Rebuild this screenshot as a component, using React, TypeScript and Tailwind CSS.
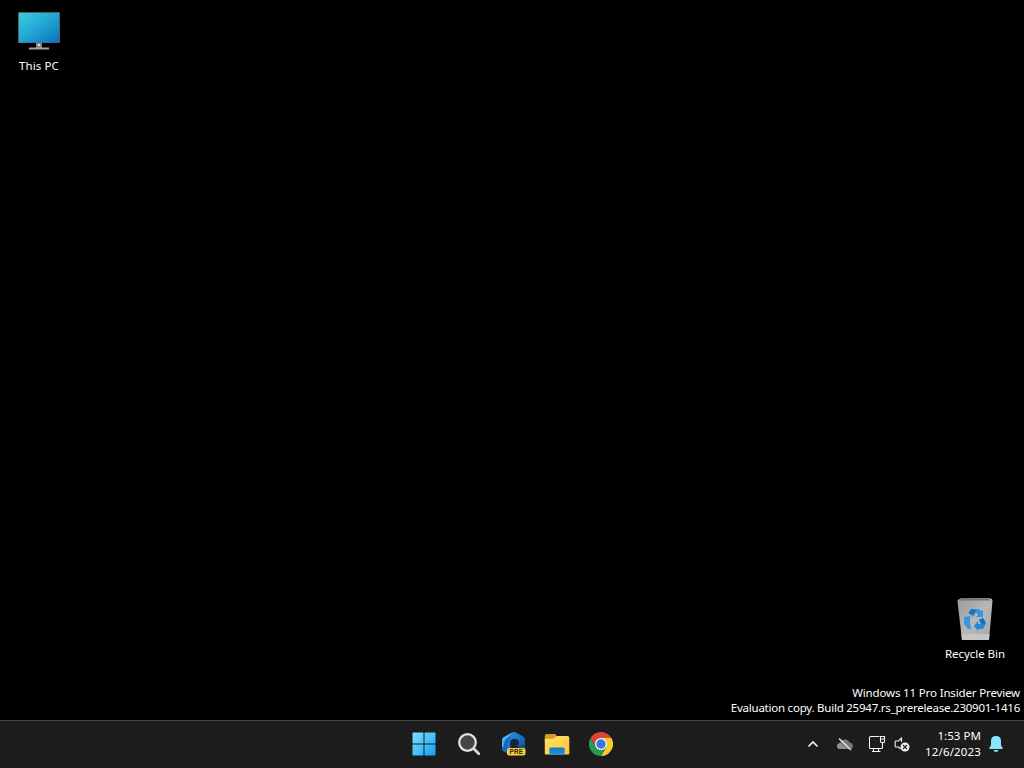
import type { ReactNode } from 'react';

function ThisPcIcon() {
  return (
    <svg className="w-12 h-12" viewBox="0 0 48 48">
      <defs>
        <linearGradient id="screen" x1="0" y1="0" x2="1" y2="1">
          <stop offset="0" stopColor="#35cfdf" />
          <stop offset="0.5" stopColor="#22a5d4" />
          <stop offset="1" stopColor="#0870bd" />
        </linearGradient>
      </defs>
      <rect x="3" y="4" width="42" height="31" rx="0.5" fill="#50606a" />
      <rect x="4" y="5" width="40" height="29.5" fill="url(#screen)" />
      <path d="M21 35h6v5h-6z" fill="#858585" />
      <path d="M23 36h2v2h-2z" fill="#dedede" />
      <path d="M14 39.5h20v2H14z" fill="#a3a3a3" />
    </svg>
  );
}

function RecycleBinIcon() {
  return (
    <svg className="w-12 h-12" viewBox="0 0 48 48">
      <defs>
        <linearGradient id="bin" x1="0" y1="0" x2="1" y2="1">
          <stop offset="0" stopColor="#999" />
          <stop offset="0.5" stopColor="#b8b8b8" />
          <stop offset="1" stopColor="#a5a5a5" />
        </linearGradient>
      </defs>
      <path d="M7.500 4.500 10 3.300H38.500Q41.500 3.300 41.500 6L38 45H11L6.500 6.500Q6.200 5 7.500 4.500Z" fill="url(#bin)" />
      <path d="M8 5.500 10.500 4H38L40 5.500Z" fill="#777" />
      <path d="M10.400 39H38.500L38 45H11Z" fill="#c6c6c6" />
      <path d="m17 18 3-4h8l2 2 2-1v7h-7l2-2-2-3-3 5Z" fill="#3a94dc" />
      <path d="m20 14 5 1-2 5-5-2Z" fill="#1473c2" />
      <path d="m13 22 6-1v7l1 6h-3l-4-5Z" fill="#3498e8" />
      <path d="m28 25 4-2 3 5-3 6h-5v2l-4-5 4-5v3h3Z" fill="#2489dc" />
      <path d="m28 25 4-2 3 5-4 1Z" fill="#0b72c6" />
    </svg>
  );
}

function StartIcon() {
  return (
    <svg className="w-6 h-6" viewBox="0 0 24 24">
      <defs>
        <linearGradient id="start" gradientUnits="userSpaceOnUse" x1="0" y1="0" x2="24" y2="24">
          <stop offset="0" stopColor="#7be2ff" />
          <stop offset="0.55" stopColor="#43bdfa" />
          <stop offset="1" stopColor="#169cf1" />
        </linearGradient>
      </defs>
      <path d="M1 .5h10.500v11H.5V1ZM12.500.5H23l.5.5v10.500h-11ZM.5 12.500h11v11H1L.5 23ZM12.500 12.500h11V23l-.5.5H12.500Z" fill="url(#start)" />
    </svg>
  );
}

function SearchIcon() {
  return (
    <svg className="w-6 h-6" viewBox="0 0 24 24" fill="none">
      <circle cx="10.500" cy="10.500" r="8.300" fill="#464646" stroke="#e4e4e4" strokeWidth="2.200" />
      <path d="m16.800 16.800 5 5" stroke="#d8d8d8" strokeWidth="2.800" strokeLinecap="round" />
    </svg>
  );
}

function EdgePreIcon() {
  return (
    <svg className="w-6 h-6" viewBox="0 0 24 24">
      <defs>
        <linearGradient id="edge" x1="0" y1="0" x2="1" y2="1">
          <stop offset="0" stopColor="#3799e6" />
          <stop offset="0.5" stopColor="#1974c9" />
          <stop offset="1" stopColor="#063f83" />
        </linearGradient>
      </defs>
      <path d="M10 .6q2-1 4 0l7 4q2 1 2 3v9q0 2-2 3l-7 4H9l-7-4q-2-1-2-3V8q0-2 2-3Z" fill="url(#edge)" />
      <path d="M0 9Q4 4 9 5 5 9 6 15l3 8-7-4q-2-1-2-3Z" fill="#1268bd" />
      <path d="M0 9V8q0-2 2-3l8-4.400Q7 5 3 8L1 16l-1-1Z" fill="#50aeef" />
      <path d="M8 11q0-4 4.500-4 4.500 0 4.500 4 0 2-2 3l3 2H9q-1-2-1-5Z" fill="#172431" />
      <path d="m15 13.500 8-.5v2l-1 1.500h-5Z" fill="#174c80" />
      <rect x="5" y="16" width="18.500" height="7.500" rx="2" fill="#f9cc3a" />
      <text x="14.300" y="22.200" textAnchor="middle" fill="#302809" className="font-['Liberation_Sans'] text-[6.5px] font-bold">PRE</text>
    </svg>
  );
}

function ExplorerIcon() {
  return (
    <svg className="w-[26px] h-6" viewBox="0 0 26 24">
      <defs>
        <linearGradient id="folder" x1="0" y1="0" x2="1" y2="1">
          <stop offset="0" stopColor="#ffe06d" />
          <stop offset="1" stopColor="#ffc832" />
        </linearGradient>
        <linearGradient id="drawer" x1="0" y1="0" x2="0" y2="1">
          <stop offset="0" stopColor="#117bc8" />
          <stop offset="1" stopColor="#2793d4" />
        </linearGradient>
      </defs>
      <path d="M.8 4Q.8 2 2.800 2H11l2.500 2.500H13v5H.8Z" fill="#d99b21" />
      <path d="M.8 6.800H9L13 4h10.500q1.800 0 1.800 2v15.500q0 1-1 1H1.800q-1 0-1-1Z" fill="url(#folder)" />
      <path d="M5.300 22.800V17q0-1.500 1.500-1.500h12.400q1.500 0 1.500 1.500v5.800Z" fill="url(#drawer)" />
    </svg>
  );
}

function ChromeIcon() {
  return (
    <svg className="w-6 h-6" viewBox="0 0 24 24">
      <path d="M12 6H22.400A12 12 0 0 1 12 24l5.200-9Z" fill="#fbc928" />
      <path d="M1.600 6A12 12 0 0 0 12 24l5.200-9L12 12 6.800 15Z" fill="#279b50" />
      <path d="m1.600 6 5.200 9L12 6h10.400A12 12 0 0 0 1.600 6Z" fill="#df4437" />
      <circle cx="12" cy="12" r="6" fill="#f5f7f9" />
      <circle cx="12" cy="12" r="4.700" fill="#3479dd" />
    </svg>
  );
}

function CloudOffIcon() {
  return (
    <svg className="w-4 h-4" viewBox="0 0 16 16">
      <path d="M3.500 13Q0 13 0 10q0-2.500 3-3Q4 3.500 8 3.500q3.500 0 4.500 3Q16 7 16 10q0 3-3 3Z" fill="#777" />
      <path d="M3.500 13Q0 13 0 10q0-2.500 3-3l7 6Z" fill="#919191" />
      <path d="m2 2.500 12 11.500" stroke="#eeeeee" strokeWidth="1.300" />
    </svg>
  );
}

function NetworkIcon() {
  return (
    <svg className="w-[18px] h-[18px]" viewBox="0 0 18 18" fill="none" stroke="#f2f2f2" strokeWidth="1.100">
      <path d="M11.500 1.500H2.500q-1 0-1 1v10q0 1 1 1h11q1 0 1-1V7.500M5.500 13.500v3M10.500 13.500v3M4 16.500h8.500" />
      <path d="M12.500 1.500h4v5q0 1-1 1h-2q-1 0-1-1ZM12.500 4h4" />
    </svg>
  );
}

function MutedIcon() {
  return (
    <svg className="w-4 h-4" viewBox="0 0 16 16" fill="none">
      <path d="M7.500 6V2L4.500 5H2q-.8 0-.8.800v4.400q0 .8.800.800h2.500l2 2" stroke="#f2f2f2" strokeWidth="1.100" />
      <circle cx="11" cy="11" r="4.500" fill="#f2f2f2" />
      <path d="m9 9 4 4m0-4-4 4" stroke="#292929" strokeWidth="1.200" />
    </svg>
  );
}

function TaskbarButton({ label, children }: { label: string; children: ReactNode }) {
  return (
    <button className="flex h-10 w-11 items-center justify-center" aria-label={label}>
      {children}
    </button>
  );
}

export default function App() {
  return (
    <div className="flex h-screen w-full flex-col overflow-hidden bg-black font-['Noto_Sans',sans-serif] text-[11.5px] leading-[15px] text-white">
      <main className="relative flex-1">
        {/* Desktop shortcuts */}
        <div className="absolute left-0 top-2 flex w-[78px] flex-col items-center gap-[2px]">
          <ThisPcIcon />
          <span className="tracking-[0.1px]">This PC</span>
        </div>
        <div className="absolute right-[9px] top-[595px] flex w-20 flex-col items-center gap-[3px]">
          <RecycleBinIcon />
          <span className="whitespace-nowrap tracking-[-0.05px]">Recycle Bin</span>
        </div>

        {/* Build watermark */}
        <div className="absolute bottom-[5px] right-1 whitespace-nowrap text-right">
          <p className="tracking-[-0.15px]">Windows 11 Pro Insider Preview</p>
          <p className="tracking-[-0.23px]">Evaluation copy. Build 25947.rs_prerelease.230901-1416</p>
        </div>
      </main>

      <footer className="grid h-12 shrink-0 grid-cols-[1fr_220px_1fr] items-center border-t border-[#414141] bg-[#1c1c1c] pb-0.5">
        <div />
        <nav className="flex items-center">
          <TaskbarButton label="Start"><StartIcon /></TaskbarButton>
          <TaskbarButton label="Search"><span className="pl-0.5"><SearchIcon /></span></TaskbarButton>
          <TaskbarButton label="Edge"><span className="pl-[3px]"><EdgePreIcon /></span></TaskbarButton>
          <TaskbarButton label="File Explorer"><span className="pl-0.5"><ExplorerIcon /></span></TaskbarButton>
          <TaskbarButton label="Chrome"><span className="pl-0.5"><ChromeIcon /></span></TaskbarButton>
        </nav>

        {/* System tray */}
        <div className="flex items-center justify-end pr-[21px]">
          <svg className="mr-[18px] h-3 w-3" viewBox="0 0 12 12" fill="none" stroke="#f2f2f2" strokeWidth="1.600">
            <path d="m1.500 8.500 4.500-4.500 4.500 4.500" />
          </svg>
          <CloudOffIcon />
          <div className="ml-[15px] flex items-center gap-2">
            <NetworkIcon />
            <MutedIcon />
          </div>
          <div className="ml-[15px] w-14 whitespace-nowrap text-right leading-4">
            <p className="tracking-[0.05px]">1:53 PM</p>
            <p className="tracking-[0.15px]">12/6/2023</p>
          </div>
          <svg className="ml-2 h-4 w-[14px]" viewBox="0 0 14 16" fill="#8be5fc">
            <path d="M7 0Q2 0 2 5v4L.3 12q-.3 1 .7 1h12q1 0 .7-1L12 9V5Q12 0 7 0ZM4.500 14h5Q9 16 7 16t-2.500-2Z" />
          </svg>
        </div>
      </footer>
    </div>
  );
}
